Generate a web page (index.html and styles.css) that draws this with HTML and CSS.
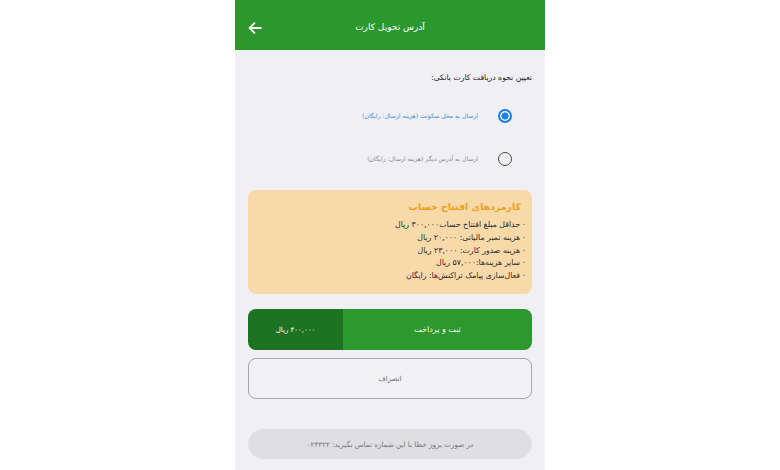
FILE: index.html
```html
<!DOCTYPE html>
<html lang="fa">
<head>
<meta charset="utf-8">
<link rel="stylesheet" href="styles.css">
</head>
<body>
<div class="phone" dir="rtl">
  <header class="appbar">
    <span class="slot"></span>
    <h1 class="title">آدرس تحویل کارت</h1>
    <span class="slot back">
      <svg width="14" height="12" viewBox="0 0 14 12"><path d="M13 6H1.8M6.5 1.2L1.5 6l5 4.8" fill="none" stroke="#fff" stroke-width="1.8" stroke-linecap="round" stroke-linejoin="round"/></svg>
    </span>
  </header>
  <main class="content">
    <p class="section-title">تعیین نحوه دریافت کارت بانکی:</p>
    <div class="options">
      <div class="option">
        <span class="radio checked"></span>
        <span class="opt-label active">ارسال به محل سکونت (هزینه ارسال: رایگان)</span>
      </div>
      <div class="option">
        <span class="radio"></span>
        <span class="opt-label">ارسال به آدرس دیگر (هزینه ارسال: رایگان)</span>
      </div>
    </div>
    <section class="fees">
      <h2 class="fees-title">کارمزدهای افتتاح حساب</h2>
      <ul class="fees-list">
        <li>· حداقل مبلغ افتتاح حساب۳۰۰,۰۰۰ ریال</li>
        <li>· هزینه تمبر مالیاتی: ۲۰,۰۰۰ ریال</li>
        <li>· هزینه صدور کارت: ۲۳,۰۰۰ ریال</li>
        <li>· سایر هزینه‌ها:۵۷,۰۰۰ ریال</li>
        <li>· فعال‌سازی پیامک تراکنش‌ها: رایگان</li>
      </ul>
    </section>
    <button class="pay">
      <span class="pay-label">ثبت و پرداخت</span>
      <span class="pay-amount">۴۰۰,۰۰۰ ریال</span>
    </button>
    <button class="cancel">انصراف</button>
    <div class="help">در صورت بروز خطا با این شماره تماس بگیرید: ۰۲۴۳۲۲</div>
  </main>
</div>
</body>
</html>
```

FILE: styles.css
```css
* { box-sizing: border-box; }
html, body { margin: 0; padding: 0; background: #ffffff; }
body { font-family: "DejaVu Sans", "Noto Sans", sans-serif; }
.phone {
  width: 310px;
  height: 470px;
  margin: 0 auto;
  background: #efeff4;
  overflow: hidden;
}
.appbar {
  height: 50px;
  background: #2b982e;
  display: grid;
  grid-template-columns: 42px 1fr 42px;
  align-items: center;
}
.title {
  margin: 0;
  text-align: center;
  color: #fff;
  font-size: 9px;
  font-weight: normal;
  padding-top: 4px;
}
.back { display: flex; justify-content: center; padding-top: 5px; padding-right: 2px; }
.content { padding: 21px 13px 0 13px; }
.section-title {
  margin: 0;
  font-size: 7.7px;
  line-height: 14px;
  color: #222;
}
.options { padding-top: 9px; }
.option {
  height: 43px;
  display: flex;
  align-items: center;
  padding-right: 20px;
}
.radio {
  width: 14px;
  height: 14px;
  border-radius: 50%;
  border: 1.5px solid #4a4a4a;
  flex: none;
  margin-left: 20px;
}
.radio.checked {
  border: 2px solid #1a7fe6;
  background: radial-gradient(circle, #1a7fe6 0 3.3px, transparent 3.8px);
}
.opt-label { font-size: 6.1px; color: #888; }
.opt-label.active { color: #3b8ed0; }
.fees {
  margin-top: 10px;
  background: #f8d9aa;
  border-radius: 8px;
  padding: 10px 7px 12px 10px;
  height: 104px;
}
.fees-title {
  margin: 0 4px 5px 0;
  font-size: 9.4px;
  line-height: 14px;
  font-weight: bold;
  color: #f0a01e;
}
.fees-list {
  list-style: none;
  margin: 0;
  padding: 0;
  font-size: 7.8px;
  line-height: 12.75px;
  color: #2a2a2a;
}
.pay {
  margin-top: 15px;
  width: 100%;
  height: 41px;
  border: none;
  padding: 0;
  border-radius: 8px;
  overflow: hidden;
  display: flex;
  font-family: inherit;
  cursor: pointer;
}
.pay-label {
  flex: 1;
  background: #2c992f;
  color: #fff;
  font-size: 8px;
  display: flex;
  align-items: center;
  justify-content: center;
}
.pay-amount {
  width: 95px;
  background: #1e7322;
  color: #fff;
  font-size: 7px;
  display: flex;
  align-items: center;
  justify-content: center;
}
.cancel {
  margin-top: 8px;
  width: 100%;
  height: 41px;
  background: #f2f2f6;
  border: 1px solid #a5a5ab;
  border-radius: 8px;
  font-family: inherit;
  font-size: 7px;
  color: #666;
}
.help {
  margin-top: 30px;
  height: 30px;
  border-radius: 15px;
  background: #dedee3;
  color: #777;
  font-size: 7.2px;
  display: flex;
  align-items: center;
  justify-content: center;
}
```
